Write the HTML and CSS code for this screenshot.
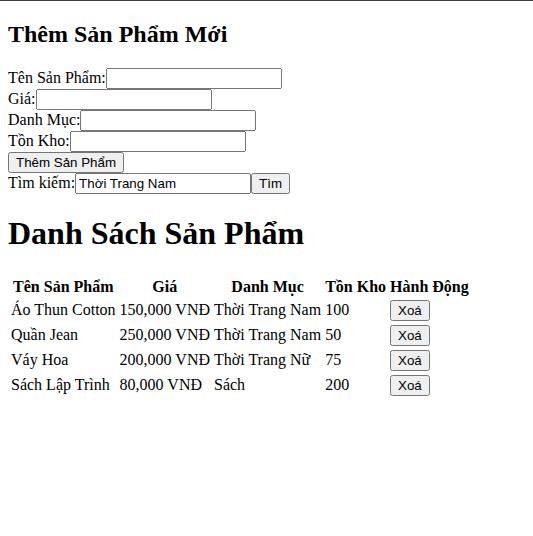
FILE: index.html
```html
<!DOCTYPE html>
<html lang="vi">
<head>
<meta charset="utf-8">
<title>Sản Phẩm</title>
<link rel="stylesheet" href="styles.css">
</head>
<body>
<h2 class="form-title">Thêm Sản Phẩm Mới</h2>
<form class="product-form">
<label>Tên Sản Phẩm:</label><input type="text" class="field"><br>
<label>Giá:</label><input type="text" class="field"><br>
<label>Danh Mục:</label><input type="text" class="field"><br>
<label>Tồn Kho:</label><input type="text" class="field"><br>
<button type="button" class="btn">Thêm Sản Phẩm</button><br>
<label>Tìm kiếm:</label><input type="text" class="field" value="Thời Trang Nam"><button type="button" class="btn">Tìm</button>
</form>
<h1 class="list-title">Danh Sách Sản Phẩm</h1>
<table class="product-table">
<thead>
<tr><th>Tên Sản Phẩm</th><th>Giá</th><th>Danh Mục</th><th>Tồn Kho</th><th>Hành Động</th></tr>
</thead>
<tbody>
<tr><td>Áo Thun Cotton</td><td>150,000 VNĐ</td><td>Thời Trang Nam</td><td>100</td><td><button type="button" class="btn">Xoá</button></td></tr>
<tr><td>Quần Jean</td><td>250,000 VNĐ</td><td>Thời Trang Nam</td><td>50</td><td><button type="button" class="btn">Xoá</button></td></tr>
<tr><td>Váy Hoa</td><td>200,000 VNĐ</td><td>Thời Trang Nữ</td><td>75</td><td><button type="button" class="btn">Xoá</button></td></tr>
<tr><td>Sách Lập Trình</td><td>80,000 VNĐ</td><td>Sách</td><td>200</td><td><button type="button" class="btn">Xoá</button></td></tr>
</tbody>
</table>
</body>
</html>
```
FILE: styles.css
```css
html {
  box-shadow: inset 0 1px 0 #3c3c3c;
}
body {
  margin: 1px 8px 8px;
  font-family: "Liberation Serif", "Times New Roman", serif;
  font-size: 16px;
  color: #000;
  background: #fff;
}
.form-title {
  margin: 0.83em 0;
}
.list-title {
  margin: 0.67em 0 calc(0.67em + 1px);
}
.field,
.btn {
  font-family: "Liberation Sans", Arial, sans-serif;
  font-size: 13.333px;
}
.field {
  width: 176px;
  box-sizing: border-box;
}
```
